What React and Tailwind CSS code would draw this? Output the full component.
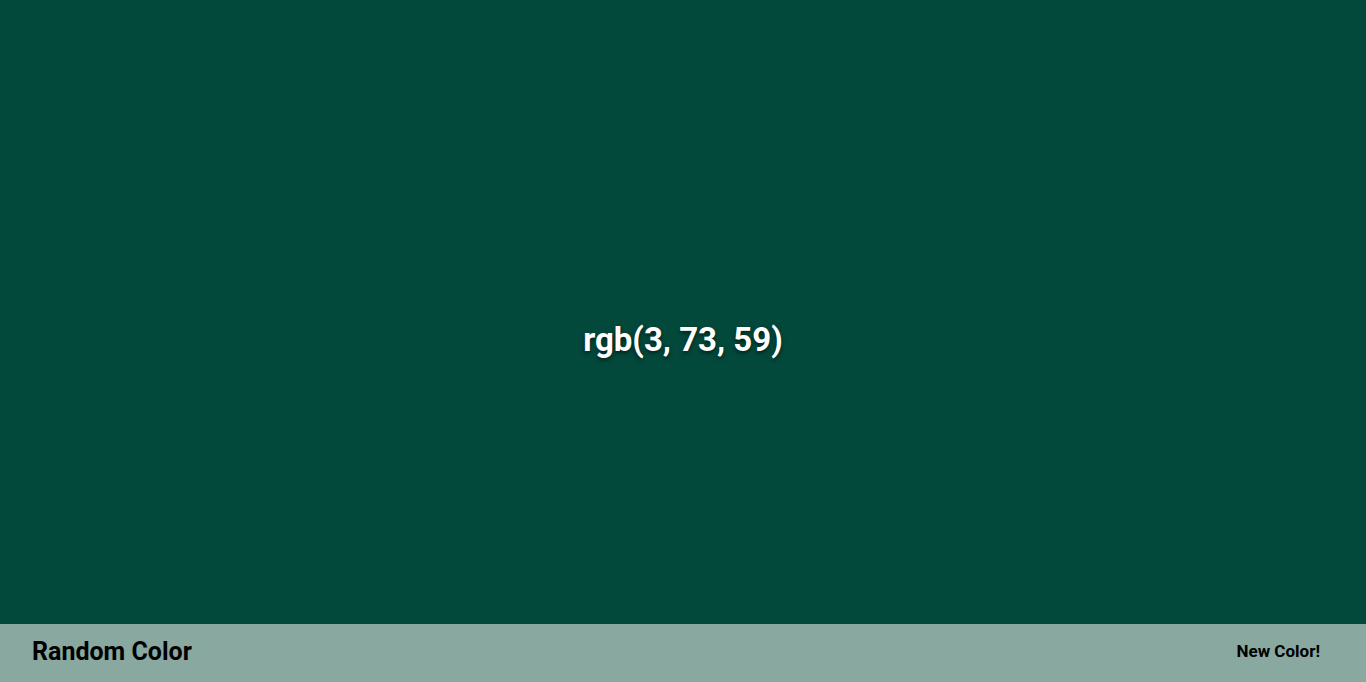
import React from "react";

export default function App() {
  const color = "rgb(3, 73, 59)";

  return (
    <div
      className="relative h-screen w-full flex items-center justify-center bg-[#03493b]"
      style={{ fontFamily: "Roboto, 'Liberation Sans', sans-serif" }}
    >
      {/* === COLOR VALUE === */}
      <h1 className="text-[33px] font-bold text-white -mt-0.5 [text-shadow:0_2px_4px_rgba(0,0,0,0.6)]">
        {color}
      </h1>

      {/* === BOTTOM BAR === */}
      <div className="absolute bottom-0 left-0 right-0 h-[58px] bg-[#88a8a0] flex items-center justify-between px-8">
        <span className="text-[25px] font-bold text-black -mt-0.5">Random Color</span>
        <button className="text-[17px] font-bold text-black px-3.5 py-2 -mt-0.5">
          New Color!
        </button>
      </div>
    </div>
  );
}
